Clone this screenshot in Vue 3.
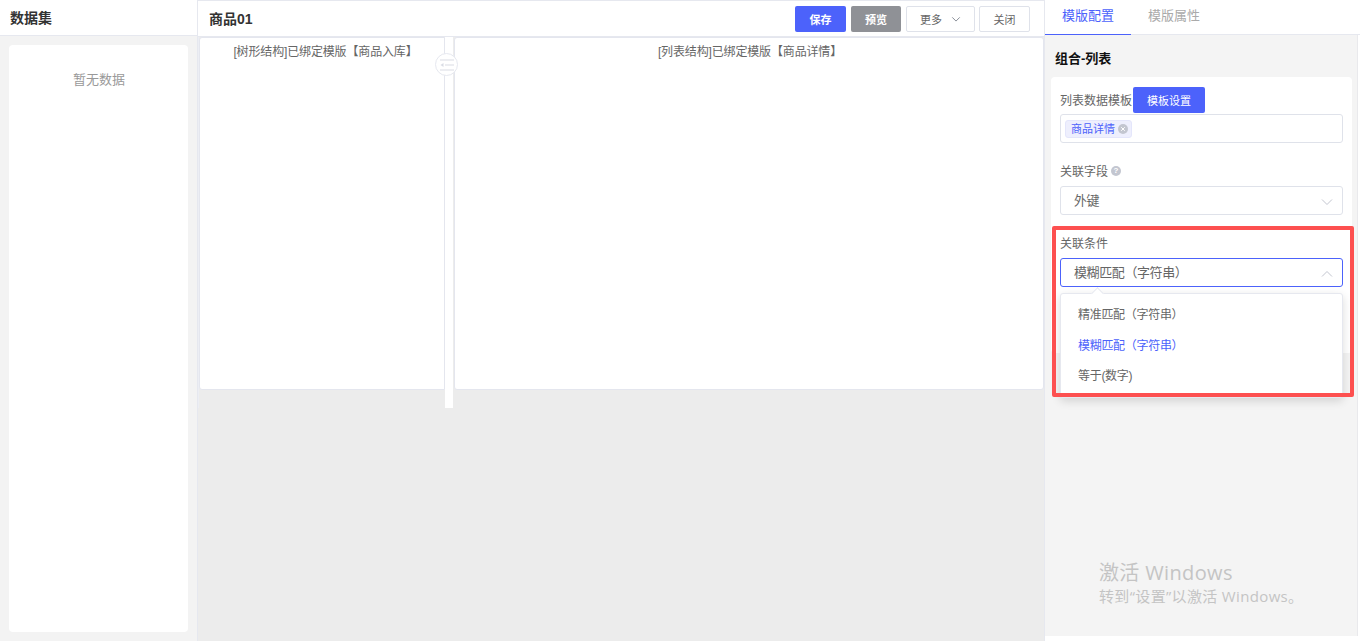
<template>
  <div class="page">
    <aside class="left">
      <div class="left-head">数据集</div>
      <div class="left-body">
        <div class="left-card">暂无数据</div>
      </div>
    </aside>

    <main class="center">
      <div class="center-head">
        <span class="title">商品01</span>
        <div class="actions">
          <button class="btn primary">保存</button>
          <button class="btn gray">预览</button>
          <button class="btn plain more">
            更多
            <svg width="10" height="10" viewBox="0 0 12 12"><path d="M1.500 4l4.500 4.500L10.500 4" fill="none" stroke="#8a8f99" stroke-width="1.200"/></svg>
          </button>
          <button class="btn plain close">关闭</button>
        </div>
      </div>
      <div class="canvas">
        <div class="split">
          <div class="pane tree">[树形结构]已绑定模版【商品入库】</div>
          <div class="divider">
            <span class="handle">
              <svg width="16" height="12" viewBox="0 0 16 12">
                <path d="M1 1h14M6 6h9M1 11h14" stroke="#d9dce4" stroke-width="1.200" fill="none"/>
                <path d="M4.500 4v4L1.500 6z" fill="#d9dce4"/>
              </svg>
            </span>
          </div>
          <div class="pane list">[列表结构]已绑定模版【商品详情】</div>
        </div>
      </div>
    </main>

    <aside class="right">
      <div class="tabs">
        <div class="tab active">模版配置</div>
        <div class="tab">模版属性</div>
      </div>
      <div class="right-body">
        <div class="section-title">组合-列表</div>
        <div class="form-card">
          <div class="field first">
            <div class="label-row">
              <span class="label">列表数据模板</span>
              <button class="btn primary small">模板设置</button>
            </div>
            <div class="input tags">
              <span class="tag">
                <span class="tag-text">商品详情</span>
                <svg width="10" height="10" viewBox="0 0 10 10">
                  <circle cx="5" cy="5" r="5" fill="#c3c6d0"/>
                  <path d="M3.200 3.200l3.600 3.600M6.800 3.200l-3.600 3.600" stroke="#fff" stroke-width="1"/>
                </svg>
              </span>
            </div>
          </div>

          <div class="field second">
            <div class="label-row plain-label">
              <span class="label">关联字段</span>
              <span class="help">?</span>
            </div>
            <div class="input select">
              <span>外键</span>
              <svg class="arrow" width="12" height="12" viewBox="0 0 12 12"><path d="M1 3.500l5 5 5-5" fill="none" stroke="#c3c6d0" stroke-width="1"/></svg>
            </div>
          </div>

          <div class="field third">
            <div class="label-row plain-label">
              <span class="label">关联条件</span>
            </div>
            <div class="input select focused">
              <span>模糊匹配（字符串）</span>
              <svg class="arrow" width="12" height="12" viewBox="0 0 12 12"><path d="M1 8.500l5-5 5 5" fill="none" stroke="#c3c6d0" stroke-width="1"/></svg>
            </div>
            <div class="dropdown">
              <div v-for="o in options" :key="o" class="option" :class="{ on: o === current }">{{ o }}</div>
            </div>
            <div class="highlight"></div>
          </div>
        </div>

        <div class="watermark">
          <div class="wm-big">激活 Windows</div>
          <div class="wm-small">转到“设置”以激活 Windows。</div>
        </div>
      </div>
    </aside>
  </div>
</template>

<script setup>
const current = '模糊匹配（字符串）'
const options = ['精准匹配（字符串）', '模糊匹配（字符串）', '等于(数字)']
</script>

<style>
html, body {
  margin: 0;
  background: #fff;
}
</style>

<style scoped>
.page {
  display: flex;
  width: 1360px;
  height: 641px;
  overflow: hidden;
  font-family: "Liberation Sans", "Noto Sans CJK SC", sans-serif;
  font-size: 12px;
  color: #555;
}
.left {
  width: 197px;
  flex: none;
  display: flex;
  flex-direction: column;
  border-right: 1px solid #e6e8ef;
}
.left-head {
  height: 35px;
  line-height: 36px;
  padding-left: 10px;
  font-size: 14px;
  font-weight: 700;
  color: #333;
  border-bottom: 1px solid #e6e8ef;
}
.left-body {
  flex: 1;
  background: #f3f3f3;
  padding: 9px;
}
.left-card {
  height: 100%;
  box-sizing: border-box;
  background: #fff;
  border-radius: 4px;
  text-align: center;
  padding-top: 24px;
  padding-left: 1px;
  font-size: 13px;
  color: #999;
}
.center {
  width: 846px;
  flex: none;
  display: flex;
  flex-direction: column;
  background: #ececec;
}
.center-head {
  height: 37px;
  flex: none;
  box-sizing: border-box;
  display: flex;
  align-items: center;
  justify-content: space-between;
  padding: 1px 14px 0 11px;
  background: #fff;
  border-top: 1px solid #e6e8ef;
  border-bottom: 1px solid #e6e8ef;
}
.title {
  font-size: 14px;
  font-weight: 700;
  color: #333;
  margin-bottom: 2px;
}
.actions {
  display: flex;
  gap: 5px;
}
.btn {
  height: 26px;
  box-sizing: border-box;
  padding: 0;
  border-radius: 2px;
  font: inherit;
  font-size: 11px;
  border: 1px solid transparent;
}
.primary {
  width: 51px;
  background: #4c62fb;
  color: #fff;
  font-weight: 700;
}
.gray {
  width: 50px;
  background: #8f9196;
  color: #fff;
  font-weight: 700;
}
.plain {
  background: #fff;
  border-color: #dfe2ea;
  color: #666;
}
.more {
  width: 69px;
  display: flex;
  align-items: center;
  justify-content: center;
  gap: 9px;
}
.close {
  width: 51px;
  margin-left: -1px;
}
.canvas {
  flex: 1;
  min-height: 0;
}
.split {
  display: flex;
  height: 371px;
  border-left: 1px solid #eceef4;
  align-items: flex-start;
}
.pane {
  flex: none;
  box-sizing: border-box;
  height: 353px;
  background: #fff;
  border: 1px solid #e4e6ee;
  border-radius: 3px;
  text-align: center;
  padding-top: 4px;
  font-size: 12px;
  letter-spacing: -0.15px;
  color: #666;
}
.tree {
  width: 246px;
  padding-left: 7px;
  border-radius: 3px 0 0 3px;
}
.divider {
  position: relative;
  width: 8px;
  height: 371px;
  flex: none;
  background: #fff;
}
.handle {
  position: absolute;
  left: -10px;
  top: 16px;
  width: 23px;
  height: 23px;
  box-sizing: border-box;
  border-radius: 50%;
  background: #fff;
  border: 1px solid #e6e8ef;
  display: flex;
  align-items: center;
  justify-content: center;
}
.list {
  width: 590px;
  margin-left: 1px;
  padding-left: 2px;
}
.right {
  flex: 1;
  display: flex;
  flex-direction: column;
  border-left: 1px solid #e6e8ef;
}
.tabs {
  display: flex;
  height: 35px;
  flex: none;
  box-sizing: border-box;
  border-bottom: 1px solid #e6e8ef;
}
.tab {
  padding: 0 17px;
  height: 35px;
  line-height: 32px;
  font-size: 13px;
  color: #aaa;
  box-sizing: border-box;
}
.tab.active {
  color: #4c62fb;
  border-bottom: 1px solid #4c62fb;
}
.right-body {
  position: relative;
  height: 601px;
  margin-right: 2px;
  background: #f4f4f4;
  border-right: 1px solid #e9e9ec;
  padding: 0 5px 0 6px;
  box-sizing: border-box;
}
.section-title {
  padding: 16px 0 0 4px;
  line-height: 16px;
  font-size: 13px;
  font-weight: 700;
  color: #111;
}
.form-card {
  margin-top: 10px;
  background: #fff;
  border-radius: 4px;
  padding: 0 9px;
  height: 276px;
  box-sizing: border-box;
}
.label-row {
  display: flex;
  align-items: center;
  height: 26px;
}
.label {
  color: #666;
  font-size: 12px;
  margin-bottom: 2px;
}
.field.first {
  padding-top: 10px;
}
.btn.small {
  width: 72px;
  height: 26px;
  margin-left: 1px;
  font-weight: 400;
}
.input {
  box-sizing: border-box;
  height: 29px;
  border: 1px solid #dfe2ea;
  border-radius: 3px;
  background: #fff;
  display: flex;
  align-items: center;
  position: relative;
  font-size: 13px;
  color: #666;
}
.tags {
  margin-top: 1px;
  padding-left: 4px;
}
.tag {
  display: inline-flex;
  align-items: center;
  gap: 3px;
  height: 18px;
  padding: 0 3px 0 5px;
  background: #eeeffd;
  border: 1px solid #e4e6fb;
  border-radius: 3px;
  color: #4c62fb;
  font-size: 11px;
  box-sizing: border-box;
}
.tag-text {
  margin-bottom: 2px;
}
.select {
  padding-left: 13px;
  padding-bottom: 2px;
  letter-spacing: -0.4px;
}
.arrow {
  position: absolute;
  right: 9px;
  top: 9px;
}
.field.second {
  margin-top: 15px;
}
.plain-label {
  height: 28px;
  gap: 3px;
}
.plain-label .label {
  margin-bottom: 4px;
}
.help {
  width: 10px;
  height: 10px;
  margin-bottom: 2px;
  border-radius: 50%;
  background: #c3c6d0;
  color: #fff;
  font-size: 8px;
  line-height: 10px;
  text-align: center;
  font-weight: 700;
}
.field.third {
  position: relative;
  margin-top: 15px;
}
.focused {
  border-color: #4c62fb;
}
.dropdown {
  position: absolute;
  z-index: 3;
  left: 0;
  top: 63px;
  width: 283px;
  height: 105px;
  box-sizing: border-box;
  background: #fff;
  border: 1px solid #e6e8ef;
  border-radius: 3px;
  box-shadow: 0 3px 10px rgba(0, 0, 0, 0.14);
  padding-top: 6px;
}
.dropdown::before {
  content: "";
  position: absolute;
  left: 32px;
  top: -5px;
  width: 8px;
  height: 8px;
  background: #fff;
  transform: rotate(45deg);
  border-left: 1px solid #e6e8ef;
  border-top: 1px solid #e6e8ef;
}
.option {
  height: 30.5px;
  line-height: 30px;
  padding-left: 17px;
  font-size: 12px;
  letter-spacing: -0.3px;
  color: #666;
}
.option.on {
  color: #4c62fb;
}
.highlight {
  position: absolute;
  z-index: 4;
  left: -8px;
  top: -4px;
  width: 302px;
  height: 171px;
  box-sizing: border-box;
  border: 4px solid #fd5050;
  border-radius: 2px;
  pointer-events: none;
}
.watermark {
  position: absolute;
  left: 54px;
  top: 524px;
  font-family: "Open Sans", "Noto Sans CJK SC", sans-serif;
  letter-spacing: 0.35px;
  color: #c4c4c4;
}
.wm-big {
  font-size: 20px;
  line-height: 27px;
}
.wm-small {
  font-size: 15px;
  line-height: 20px;
}
</style>
